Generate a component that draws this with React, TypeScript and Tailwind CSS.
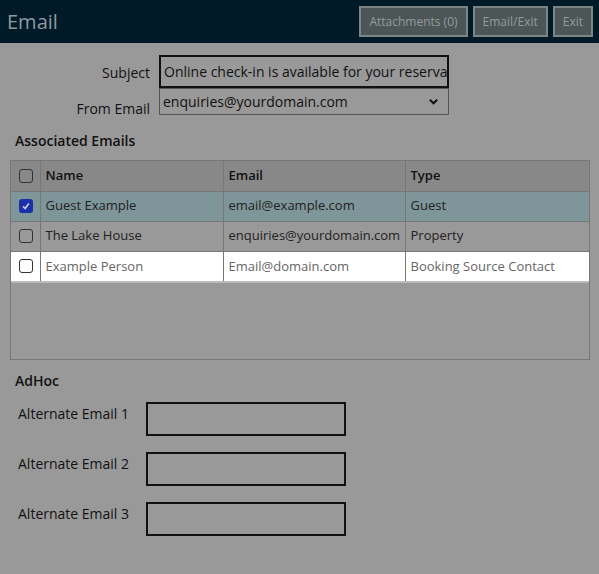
import React from 'react';

const font = { fontFamily: '"Open Sans", "Noto Sans", sans-serif' };

const rows = [
  { name: 'Guest Example', email: 'email@example.com', type: 'Guest', checked: true, cls: 'bg-[#7e9599] text-[#222]' },
  { name: 'The Lake House', email: 'enquiries@yourdomain.com', type: 'Property', checked: false, cls: 'bg-[#999999] text-[#222]' },
  { name: 'Example Person', email: 'Email@domain.com', type: 'Booking Source Contact', checked: false, cls: 'bg-white text-[#666] shadow-[0_2px_0_#bbb]' },
];

function Box({ checked }: { checked: boolean }) {
  if (checked) {
    return (
      <span className="flex h-[14px] w-[14px] items-center justify-center rounded-[3px] bg-[#1a2fa8]">
        <svg viewBox="0 0 12 12" className="h-[10px] w-[10px]" fill="none" stroke="#c8cce0" strokeWidth="2">
          <path d="M2.5 6.5l2.5 2.5 4.5-6" />
        </svg>
      </span>
    );
  }
  return <span className="block h-[14px] w-[14px] rounded-[3px] border border-[#333] bg-transparent" />;
}

export default function App() {
  return (
    <div className="h-[574px] w-[599px] bg-[#999999] text-[#111]" style={font}>
      <header className="flex h-[43px] items-center justify-between bg-[#001a28] pl-[7px] pr-[6px]">
        <h1 className="text-[20px] text-[#8f999f]">Email</h1>
        <div className="flex gap-[5px]">
          {['Attachments (0)', 'Email/Exit', 'Exit'].map((b) => (
            <button key={b} className="h-[31px] border-2 border-[#7b8585] bg-[#4d5656] px-[8px] text-[12px] text-[#939c9c]">
              {b}
            </button>
          ))}
        </div>
      </header>

      <div className="mt-[12px] grid grid-cols-[150px_290px] gap-x-[9px]">
        <label className="self-center pt-[2px] text-right text-[14px]">Subject</label>
        <div className="flex h-[33px] items-center overflow-hidden whitespace-nowrap border-2 border-[#111] px-[3px] text-[14px]">
          Online check-in is available for your reservation
        </div>
        <label className="self-start pt-[11px] text-right text-[14px] leading-[20px]">From Email</label>
        <div className="flex h-[27px] items-center justify-between border border-[#555] px-[3px] text-[14px]">
          <span>enquiries@yourdomain.com</span>
          <svg viewBox="0 0 12 12" className="mr-[6px] h-[11px] w-[11px]" fill="none" stroke="#111" strokeWidth="2.2">
            <path d="M2 4l4 4 4-4" />
          </svg>
        </div>
      </div>

      <h2 className="ml-[15px] mt-[11px] text-[14px] font-semibold">Associated Emails</h2>

      <div className="ml-[10px] mt-[9px] h-[200px] w-[580px] border border-[#777]">
        <table className="w-full border-collapse text-[13px]">
          <thead>
            <tr className="h-[30px] bg-[#888888] text-left font-semibold text-[#111]">
              <th className="w-[29px] border-r border-[#777] pl-[8px]">
                <Box checked={false} />
              </th>
              <th className="w-[183px] border-r border-[#777] pl-[5px] font-semibold">Name</th>
              <th className="w-[182px] border-r border-[#777] pl-[5px] font-semibold">Email</th>
              <th className="pl-[5px] font-semibold">Type</th>
            </tr>
          </thead>
          <tbody>
            {rows.map((r) => (
              <tr key={r.name} className={`h-[30px] border-t border-[#777] ${r.cls}`}>
                <td className="border-r border-[#777] pl-[8px]">
                  <Box checked={r.checked} />
                </td>
                <td className="border-r border-[#777] pl-[5px]">{r.name}</td>
                <td className="border-r border-[#777] pl-[5px]">{r.email}</td>
                <td className="pl-[5px]">{r.type}</td>
              </tr>
            ))}
          </tbody>
        </table>
      </div>

      <h2 className="ml-[15px] mt-[10px] text-[14px] font-semibold">AdHoc</h2>

      <div className="ml-[18px] mt-[11px] flex flex-col gap-[16px]">
        {[1, 2, 3].map((n) => (
          <div key={n} className="flex items-start">
            <span className="w-[128px] pt-[1px] text-[14px]">Alternate Email {n}</span>
            <div className="h-[34px] w-[200px] border-2 border-[#111]" />
          </div>
        ))}
      </div>
    </div>
  );
}
